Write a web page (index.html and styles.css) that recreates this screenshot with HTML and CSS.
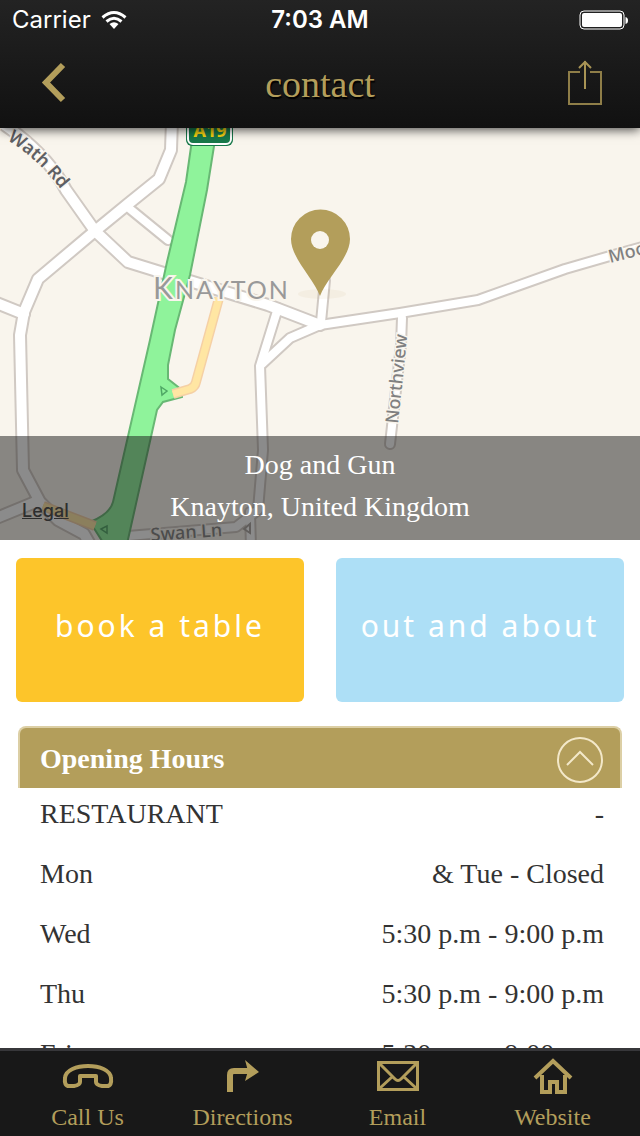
FILE: index.html
```html
<!DOCTYPE html>
<html lang="en">
<head>
  <meta charset="UTF-8">
  <meta name="viewport" content="width=device-width, initial-scale=1.0">
  <title>Contact - Dog and Gun</title>
  <link rel="stylesheet" href="styles.css">
</head>
<body>
  <header class="top">
    <div class="status">
      <div class="carrier">
        <span>Carrier</span>
        <svg width="26" height="20" viewBox="0 0 26 20">
          <g fill="none" stroke="#fff" stroke-width="3">
            <path d="M1.500 7.500Q13 -2.500 24.500 7.500"/>
            <path d="M5.500 11.500Q13 5 20.500 11.500"/>
          </g>
          <path d="M8.500 14Q13 10.500 17.500 14L13 19Z" fill="#fff"/>
        </svg>
      </div>
      <span class="time">7:03 AM</span>
      <div class="battery">
        <svg width="50" height="20" viewBox="0 0 50 20">
          <rect x="2" y="1" width="44" height="18" rx="4" fill="none" stroke="#fff"/>
          <rect x="4" y="3" width="40" height="14" rx="2" fill="#fff"/>
          <path d="M47.500 7Q50 7.500 50 10.500T47.500 14Z" fill="#fff"/>
        </svg>
      </div>
    </div>
    <div class="bar">
      <button type="button" class="icon-btn" aria-label="Back">
        <svg width="28" height="44" viewBox="0 0 28 44">
          <path d="M23 3L6 20.500L23 38" fill="none" stroke="#b39e5b" stroke-width="6"/>
        </svg>
      </button>
      <h1>contact</h1>
      <button type="button" class="icon-btn share" aria-label="Share">
        <svg width="36" height="48" viewBox="0 0 36 48" fill="none" stroke="#8f7e48" stroke-width="2">
          <path d="M12 12H1V44H33V12H22"/>
          <path d="M17 29V1M11 8L17 2L23 8" stroke="#a89455"/>
        </svg>
      </button>
    </div>
  </header>

  <main>
    <section class="map">
      <svg class="map-art" viewBox="0 128 640 412" preserveAspectRatio="xMidYMid slice">
        <defs>
          <g id="roads">
            <path d="M-6 118Q45 150 66 190L95 231L128 262L170 275L268 305L320 325"/>
            <path d="M172 120L171 150L159 179L128 204L95 231L38 279L24 312L20 335L23 470L40 502L58 520L84 534L92 548"/>
            <path d="M-6 302L24 314"/>
            <path d="M-6 519L38 501"/>
          </g>
          <g id="lanes">
            <path d="M320 325L400 313L478 300L565 269L610 256L650 245"/>
            <path d="M320 325L290 338L262 364"/>
            <path d="M278 308L260 366L263 450L258 510L236 527L128 536"/>
            <path d="M250 512L251 548"/>
            <path d="M130 209L168 240"/>
            <path d="M402 318L401 345L390 444"/>
            <path d="M321 322L325 280"/>
          </g>
        </defs>
        <rect y="128" width="640" height="412" fill="#f9f5ed"/>
        <g fill="none" stroke-linejoin="round" stroke-linecap="round">
          <use href="#lanes" stroke="#d0c9c3" stroke-width="12"/>
          <use href="#roads" stroke="#d0c9c3" stroke-width="14"/>
          <use href="#lanes" stroke="#fff" stroke-width="8"/>
          <use href="#roads" stroke="#fff" stroke-width="10"/>
        </g>
        <path d="M192 140L186 182L167 262L150 340L113 502Q110 514 90 522L104 544H127L157 410L163 402L182 397V390L168 379V365L175 330L190 275L207 190L215 140Z" fill="#8ff39b" stroke="#68b874" stroke-width="2"/>
        <path d="M161 387L167 391L162 395ZM101 529L107 526V533Z" fill="none" stroke="#4fa765" stroke-width="1.500"/>
        <g fill="none" stroke-linejoin="round">
          <path d="M219 298L196 382Q195 387 190 389L173 394M43 506L95 526" stroke="#f5d0a5" stroke-width="10"/>
          <path d="M219 298L196 382Q195 387 190 389L173 394M43 506L95 526" stroke="#ffe6a3" stroke-width="7"/>
        </g>
        <path d="M244 529L250 524V533Z" fill="none" stroke="#aaa5a0" stroke-width="2"/>
        <rect x="186" y="112" width="47" height="34" rx="6" fill="#18794a"/>
        <rect x="188" y="114" width="43" height="30" rx="5" fill="#18794a" stroke="#fff" stroke-width="2"/>
        <text class="shield" x="210" y="137" text-anchor="middle">A19</text>
        <path id="wath" d="M7 140Q38 158 66 196" fill="none"/>
        <text class="street dark"><textPath href="#wath">Wath Rd</textPath></text>
        <text class="street dark" transform="translate(-6 130) rotate(30)">l</text>
        <text class="town" x="153" y="299"><tspan class="cap">K</tspan>NAYTON</text>
        <text class="street" transform="translate(610 263) rotate(-14)">Moor Rd</text>
        <text class="street" transform="translate(398 424) rotate(-84)">Northview</text>
        <text class="street" transform="translate(151 541) rotate(-4)">Swan Ln</text>
        <ellipse cx="322" cy="294" rx="24" ry="5" fill="#b39e5b" opacity=".07"/>
        <path d="M320 296C314 279 291 258 291 239A29 29 0 0 1 350 239C350 258 326 279 320 296Z" fill="#b39e5b"/>
        <circle cx="320" cy="240" r="9" fill="#f9f5ed"/>
      </svg>
      <a class="legal" href="#legal">Legal</a>
      <div class="address">
        <div>Dog and Gun</div>
        <div>Knayton, United Kingdom</div>
      </div>
    </section>

    <div class="tiles">
      <button type="button" class="tile yellow">book a table</button>
      <button type="button" class="tile blue">out and about</button>
    </div>

    <section class="hours">
      <button type="button" class="hours-head" aria-expanded="true">
        <span>Opening Hours</span>
        <svg width="48" height="48" viewBox="0 0 48 48" fill="none" stroke="#f3e8c9" stroke-width="2">
          <circle cx="24" cy="25" r="22"/>
          <path d="M11 30L24 17L37 30"/>
        </svg>
      </button>
      <table>
        <tr><th scope="row">RESTAURANT</th><td>-</td></tr>
        <tr><th scope="row">Mon</th><td>&amp; Tue - Closed</td></tr>
        <tr><th scope="row">Wed</th><td>5:30 p.m - 9:00 p.m</td></tr>
        <tr><th scope="row">Thu</th><td>5:30 p.m - 9:00 p.m</td></tr>
        <tr><th scope="row">Fri</th><td>5:30 p.m - 9:00 p.m</td></tr>
      </table>
    </section>
  </main>

  <nav class="tabs">
    <a href="#call">
      <svg width="52" height="40" viewBox="0 0 52 40" fill="none" stroke="#b39e5b" stroke-width="4">
        <path d="M7 30Q2 30 3 22C4 6 48 6 49 22Q50 30 45 30H40Q34 29 34 26V20H18V26Q18 29 12 30Z" stroke-linejoin="round"/>
      </svg>
      <span>Call Us</span>
    </a>
    <a href="#directions">
      <svg width="52" height="40" viewBox="0 0 52 40">
        <path d="M13 36V19Q13 15 17 15H32" fill="none" stroke="#b39e5b" stroke-width="6"/>
        <path d="M28 4L42 16L28 25L31 15Z" fill="#b39e5b"/>
      </svg>
      <span>Directions</span>
    </a>
    <a href="#email">
      <svg width="52" height="40" viewBox="0 0 52 40" fill="none" stroke="#b39e5b" stroke-width="3">
        <rect x="6.500" y="6.500" width="39" height="27"/>
        <path d="M8 8L23 23Q26 26 29 23L44 8M8 32L20 21M44 32L32 21"/>
      </svg>
      <span>Email</span>
    </a>
    <a href="#website">
      <svg width="52" height="40" viewBox="0 0 52 40" fill="none" stroke="#b39e5b" stroke-width="4">
        <path d="M8 22L26 5L44 22M15 19V36H23V26H30V36H38V19"/>
      </svg>
      <span>Website</span>
    </a>
  </nav>
</body>
</html>
```
FILE: styles.css
```css
* { box-sizing: border-box; }
body { margin: 0; height: 100vh; display: flex; flex-direction: column; background: #fff; color: #333; font-family: "Liberation Serif", "Times New Roman", serif; font-size: 28px; line-height: 36px; }
button { border: none; padding: 0; background: none; font: inherit; color: inherit; cursor: pointer; }
a { color: inherit; text-decoration: none; }
svg { display: block; }

.top { position: relative; z-index: 2; flex: none; background: linear-gradient(#232323, #111); box-shadow: 0 2px 10px rgba(0,0,0,0.7); }
.status { display: grid; grid-template-columns: 1fr auto 1fr; align-items: center; height: 40px; padding: 0 12px; color: #fff; font-family: Inter, sans-serif; font-size: 24px; line-height: 40px; }
.carrier { display: flex; align-items: center; gap: 10px; }
.time { font-weight: 600; }
.battery { justify-self: end; }
.bar { display: grid; grid-template-columns: 1fr auto 1fr; align-items: center; height: 88px; padding: 0 36px; }
.icon-btn { justify-self: start; padding: 4px; }
.share { justify-self: end; padding: 0; }
h1 { margin: 0; color: #b39e5b; font-size: 38px; font-weight: normal; line-height: 44px; text-shadow: 1px 2px 1px #000; }

main { flex: 1; min-height: 0; overflow: hidden; }
.map { position: relative; height: 412px; overflow: hidden; }
.map-art { width: 100%; height: 100%; }
.street { font: 500 18px "Noto Sans", sans-serif; fill: #808080; stroke: #f9f5ed; stroke-width: 3px; paint-order: stroke; }
.dark { font-weight: 600; fill: #5f6064; }
.town { font: 25px Lato, sans-serif; letter-spacing: 2px; fill: #999; stroke: #f9f5ed; stroke-width: 4px; paint-order: stroke; }
.cap { font-size: 30px; }
.shield { font: bold 18px "Noto Sans", sans-serif; fill: #f8d511; }
.legal { position: absolute; left: 22px; bottom: 15px; color: #444; font: 500 18px/28px Inter, sans-serif; text-decoration: underline; }
.address { position: absolute; left: 0; right: 0; bottom: 0; padding: 8px 16px 12px; background: rgba(24,24,24,0.5); color: #fff; line-height: 42px; text-align: center; pointer-events: none; }

.tiles { display: grid; grid-template-columns: 1fr 1fr; gap: 32px; padding: 18px 16px 24px; }
.tile { height: 144px; padding-bottom: 8px; border-radius: 6px; color: #fff; font-family: "Noto Sans", sans-serif; font-size: 30px; letter-spacing: 3px; }
.yellow { background: #fdc52a; }
.blue { background: #addff6; }

.hours { margin: 0 18px; }
.hours-head { display: flex; align-items: center; justify-content: space-between; width: 100%; height: 62px; padding: 2px 16px 0 20px; border: 2px solid #dccfa5; border-bottom: none; border-radius: 8px 8px 0 0; background: #b39e5b; color: #fff; font-weight: bold; }
table { width: 100%; border-collapse: collapse; }
th, td { padding: 8px 18px 16px 22px; font-weight: normal; text-align: left; }
td { text-align: right; }

.tabs { display: grid; grid-template-columns: repeat(4, 1fr); flex: none; height: 88px; padding: 5px 10px 0; border-top: 3px solid #37373a; background: #181818; color: #b39e5b; font-size: 24px; line-height: 28px; }
.tabs a { display: flex; flex-direction: column; align-items: center; gap: 7px; }
```
